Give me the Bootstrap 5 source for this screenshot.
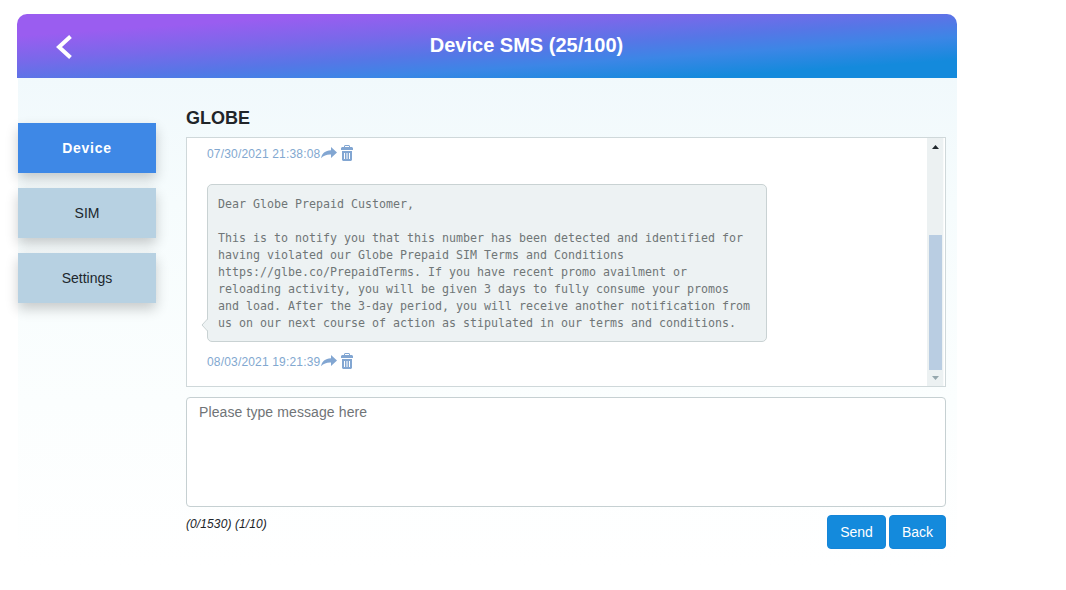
<!DOCTYPE html>
<html lang="en">
<head>
<meta charset="utf-8">
<meta name="viewport" content="width=device-width, initial-scale=1">
<title>Device SMS</title>
<link href="https://cdn.jsdelivr.net/npm/bootstrap@5.3.0/dist/css/bootstrap.min.css" rel="stylesheet">
<style>
  body { font: 14px/20px "Liberation Sans", Arial, sans-serif; color: #212529; background: #fff; overflow: hidden; }
  .sms-shell { width: 940px; margin: 14px 0 0 17px; }
  .sms-header { height: 64px; border-radius: 10px 10px 0 0; color: #fff;
    background: linear-gradient(to bottom right, #9a5df0 17%, #7a68ea 36%, #5676e6 54%, #3c86e6 68%, #148adc 86%); }
  .sms-header h1 { font-size: 20px; line-height: 24px; font-weight: 700; padding-left: 23px; margin: 0 0 3px; }
  .back-link { width: 17px; margin: 1px 0 0 39px; }
  .sms-main { height: 498px; margin-left: 1px; background: linear-gradient(#f1f9fc, #f6fcfd 25%, #fbfefe 65%, #fff 98%); }
  .side-tabs { width: 138px; padding-top: 45px; gap: 15px; }
  .side-tab { height: 50px; color: #20272d; background: #b7d1e2; text-decoration: none; box-shadow: 0 6px 12px rgba(0,0,0,.2); }
  .side-tab.active { color: #fff; background: #3e88e6; font-weight: 700; letter-spacing: .75px; }
  .conversation { width: 760px; margin-left: 30px; padding-top: 30px; }
  .conversation h2 { font-size: 18px; line-height: 20px; font-weight: 700; margin: 0 0 9px; }
  .thread { height: 250px; background: #fff; border: 1px solid #cfd8da; }
  .messages { padding: 6px 0 0 20px; }
  .stamp { height: 20px; font-size: 12px; letter-spacing: .17px; color: #82a8d0; }
  .stamp span { width: 114px; }
  .stamp svg { fill: #82a6d2; display: block; position: relative; bottom: 1px; }
  .bubble { width: 560px; height: 158px; margin: 20px 0 10px; padding: 11px 0 0 10px; border: 1px solid #c9d2d3; border-radius: 5px; background: #edf2f3; }
  .bubble p { font: 11.64px/17px "DejaVu Sans Mono", monospace; color: #707677; margin: 0; white-space: pre; }
  .bubble-tail { left: -7px; bottom: 9px; }
  .scroll-track { width: 17px; background: #ecf1f2; border-right: 1px solid #f8fafa; padding: 7px 0 6px; margin-right: 1px; }
  .scroll-thumb { width: 13px; height: 135px; background: #b9cde2; margin-top: auto; margin-bottom: 6px; }
  .compose { height: 110px; margin-top: 10px; padding: 4px 12px; font-size: 14px; line-height: 20px; letter-spacing: .1px; resize: none; border: 1px solid #c6d0d2; border-radius: 4px; }
  .compose::placeholder { color: #707477; }
  .counter { font-size: 12px; line-height: 16px; font-style: italic; letter-spacing: .1px; padding-top: 1px; }
  .send-row { gap: 3px; }
  .btn-sms { height: 34px; padding: 6px 12px; font-size: 14px; line-height: 20px; color: #fff; background: #148adc; border: 1px solid #1485d8; border-radius: 4px; }
</style>
</head>
<body>
<svg class="d-none">
  <symbol id="forward" viewBox="0 0 16 12"><path d="M10 0l6 5.500-6 5.500V7.500C5.800 7.300 2.800 8.300 0 11.300 .9 6.500 4 3.500 10 3.200z"/></symbol>
  <symbol id="trash" viewBox="0 0 12 16"><path d="M3 1l1-1h4l1 1v1h2l1 1v2H0V3l1-1h2zM4 1v1h4V1z" fill-rule="evenodd"/><path d="M1 6h10v9l-1 1H2l-1-1zM3 8v6h1V8zM5.500 8v6h1V8zM8 8v6h1V8z" fill-rule="evenodd"/></symbol>
</svg>
<div class="sms-shell">
  <header class="sms-header d-flex align-items-center">
    <a class="back-link" href="#" aria-label="Back"><svg class="d-block" width="17" height="24" viewBox="0 0 17 24"><path d="M14.500 1.500L3 12l11.500 10.500" fill="none" stroke="#fff" stroke-width="4"/></svg></a>
    <h1 class="flex-grow-1 text-center">Device SMS (25/100)</h1>
  </header>
  <main class="sms-main d-flex">
    <nav class="side-tabs d-flex flex-column">
      <a class="side-tab active d-flex align-items-center justify-content-center" href="#">Device</a>
      <a class="side-tab d-flex align-items-center justify-content-center" href="#">SIM</a>
      <a class="side-tab d-flex align-items-center justify-content-center" href="#">Settings</a>
    </nav>
    <section class="conversation">
      <h2>GLOBE</h2>
      <div class="thread d-flex">
        <div class="messages flex-grow-1">
          <div class="stamp d-flex align-items-center"><span>07/30/2021 21:38:08</span><svg width="16" height="12"><use href="#forward"/></svg><svg class="ms-1" width="12" height="16"><use href="#trash"/></svg></div>
          <div class="bubble position-relative"><p>Dear Globe Prepaid Customer,

This is to notify you that this number has been detected and identified for
having violated our Globe Prepaid SIM Terms and Conditions
https://glbe.co/PrepaidTerms. If you have recent promo availment or
reloading activity, you will be given 3 days to fully consume your promos
and load. After the 3-day period, you will receive another notification from
us on our next course of action as stipulated in our terms and conditions.</p>
            <svg class="bubble-tail position-absolute" width="8" height="14" viewBox="0 0 8 14"><path d="M8 0H7v1L1 7l6 6v1h1z" fill="#edf2f3"/><path d="M6.500 0v1L1 7l5.500 6v1" fill="none" stroke="#c9d2d3"/></svg>
          </div>
          <div class="stamp d-flex align-items-center"><span>08/03/2021 19:21:39</span><svg width="16" height="12"><use href="#forward"/></svg><svg class="ms-1" width="12" height="16"><use href="#trash"/></svg></div>
        </div>
        <div class="scroll-track d-flex flex-column align-items-center">
          <svg width="7" height="4"><path d="M0 4L3.500 0 7 4z" fill="#20272d"/></svg>
          <div class="scroll-thumb"></div>
          <svg width="7" height="4"><path d="M0 0h7L3.500 4z" fill="#95a7ad"/></svg>
        </div>
      </div>
      <textarea class="compose form-control" placeholder="Please type message here"></textarea>
      <div class="d-flex justify-content-between align-items-start mt-2">
        <div class="counter">(0/1530) (1/10)</div>
        <div class="send-row d-flex"><button class="btn btn-sms">Send</button><button class="btn btn-sms">Back</button></div>
      </div>
    </section>
  </main>
</div>
<script src="https://cdn.jsdelivr.net/npm/bootstrap@5.3.0/dist/js/bootstrap.bundle.min.js"></script>
</body>
</html>
